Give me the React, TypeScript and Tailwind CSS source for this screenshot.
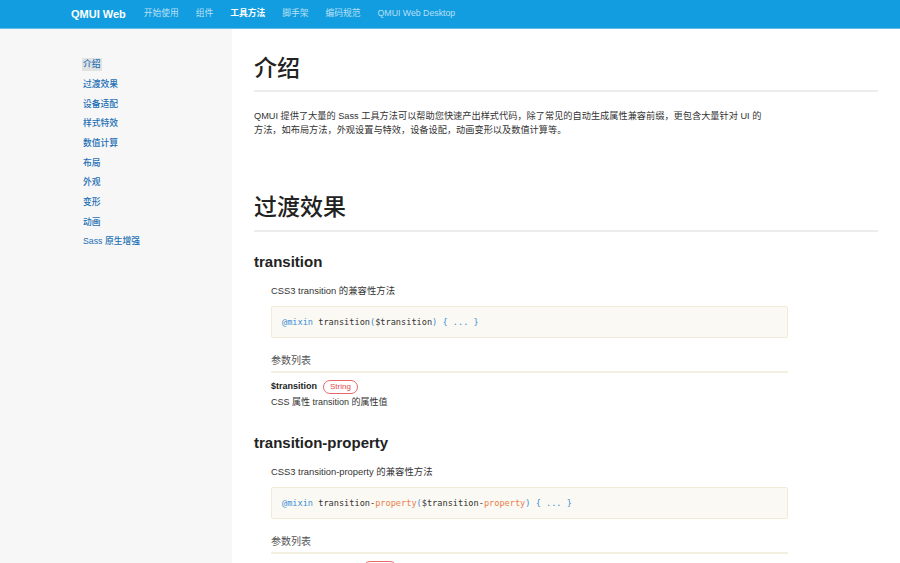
import React from 'react'

const sans = "font-['Liberation_Sans','Noto_Sans_CJK_SC',sans-serif]"

const navItems = ['开始使用', '组件', '工具方法', '脚手架', '编码规范', 'QMUI Web Desktop']
const sideItems = ['介绍', '过渡效果', '设备适配', '样式特效', '数值计算', '布局', '外观', '变形', '动画', 'Sass 原生增强']

function Code({ name, param }: { name: string; param: string }) {
  // name like "transition-property" -> the "-property" part in orange
  const render = (s: string, prefix = '') => {
    const idx = s.indexOf('-')
    if (idx < 0) return <span className="text-[#333]">{prefix + s}</span>
    return (
      <>
        <span className="text-[#333]">{prefix + s.slice(0, idx)}</span>
        <span className="text-[#333]">-</span>
        <span className="text-[#e8804f]">{s.slice(idx + 1)}</span>
      </>
    )
  }
  return (
    <div className="mt-[8px] h-[32px] rounded-[2px] border border-[#f1ead6] bg-[#fbf9f3] px-[10px] flex items-center font-['DejaVu_Sans_Mono','Liberation_Mono',monospace] text-[8.6px] whitespace-pre">
      <span className="text-[#3b8fd6]">@mixin</span>
      <span> </span>
      {render(name)}
      <span className="text-[#3b8fd6]">(</span>
      {render(param, '$')}
      <span className="text-[#3b8fd6]">)</span>
      <span className="text-[#3b8fd6]">{' { ... }'}</span>
    </div>
  )
}

function ParamRow({ name }: { name: string }) {
  return (
    <div className="mt-[6px] h-[16px] flex items-center gap-[6px]">
      <span className="text-[9px] font-bold text-[#222]">${name}</span>
      <span className="h-[14px] px-[6px] rounded-full border border-[#e8676a] text-[#e04b4e] text-[8px] leading-[12px]">String</span>
    </div>
  )
}

function MixinSection({ name, first }: { name: string; first?: boolean }) {
  return (
    <section className={first ? 'mt-[20px]' : 'mt-[24px]'}>
      <h2 className="text-[15px] leading-[20px] font-bold text-[#222]">{name}</h2>
      <div className="ml-[17px] w-[517px]">
        <p className="mt-[12px] text-[9.4px] leading-[14px] text-[#333]">CSS3 {name} 的兼容性方法</p>
        <Code name={name} param={name} />
        <h3 className="mt-[16px] pb-[3px] border-b-2 border-[#f5efe2] text-[10px] leading-[14px] text-[#555]">参数列表</h3>
        <ParamRow name={name} />
        <p className="text-[9px] leading-[14px] text-[#333]">CSS 属性 {name} 的属性值</p>
      </div>
    </section>
  )
}

export default function App() {
  return (
    <div className={`${sans} h-screen overflow-hidden flex flex-col bg-white`}>
      {/* Top navigation */}
      <nav className="h-[29px] shrink-0 bg-[#129de0] border-b border-[#62bde9] flex items-center pl-[71px]">
        <span className="text-[11px] font-bold text-white mr-[18px]">QMUI Web</span>
        <div className="flex items-center gap-[17px]">
          {navItems.map((item) => (
            <span
              key={item}
              className={`text-[8.75px] ${item === '工具方法' ? 'text-white font-bold' : 'text-white/70'}`}
            >
              {item}
            </span>
          ))}
        </div>
      </nav>

      <div className="flex flex-1 min-h-0">
        {/* Sidebar */}
        <aside className="w-[232px] shrink-0 bg-[#f7f7f7] pt-[26px] pl-[82px]">
          <ul>
            {sideItems.map((item, i) => (
              <li key={item} className="h-[19.7px] flex items-center">
                <span
                  className={`text-[8.75px] font-medium text-[#1b6fb5] px-[1px] ${i === 0 ? 'bg-[#e2e2e2]' : ''}`}
                >
                  {item}
                </span>
              </li>
            ))}
          </ul>
        </aside>

        {/* Main content */}
        <main className="flex-1 px-[22px]">
          <h1 className="mt-[23px] pb-[6px] border-b-2 border-[#ececec] text-[23px] leading-[32px] font-medium text-[#222]">介绍</h1>
          <p className="mt-[17px] text-[9.2px] leading-[14px] text-[#333]">
            QMUI 提供了大量的 Sass 工具方法可以帮助您快速产出样式代码，除了常见的自动生成属性兼容前缀，更包含大量针对 UI 的
            <br />
            方法，如布局方法，外观设置与特效，设备设配，动画变形以及数值计算等。
          </p>

          <h1 className="mt-[54px] pb-[7px] border-b-2 border-[#ececec] text-[23px] leading-[32px] font-medium text-[#222]">过渡效果</h1>

          <MixinSection name="transition" first />
          <MixinSection name="transition-property" />
        </main>
      </div>
    </div>
  )
}
